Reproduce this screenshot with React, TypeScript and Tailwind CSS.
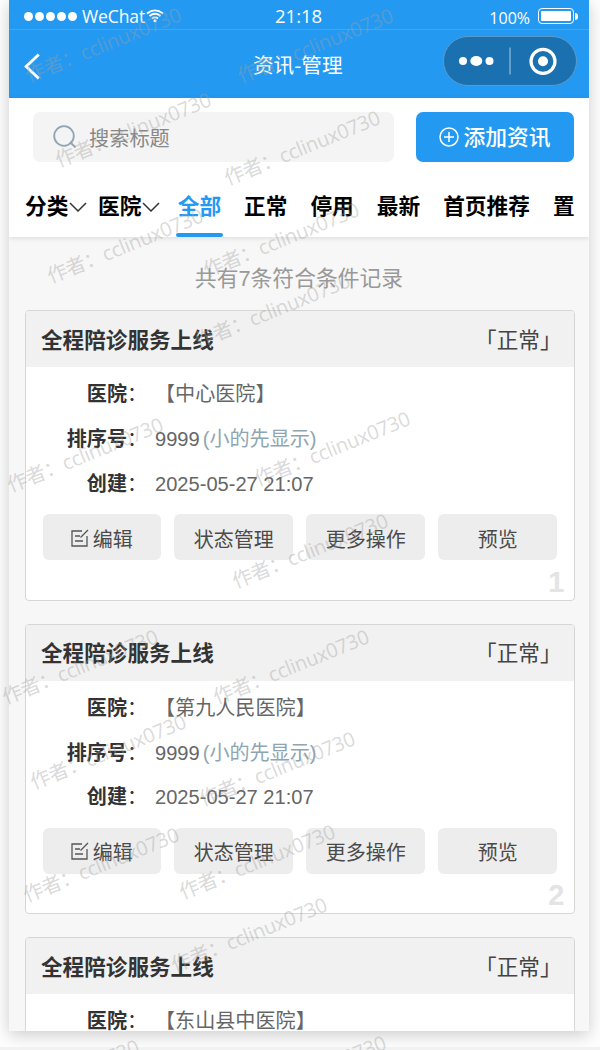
const filters = ["正常", "停用", "最新", "首页推荐", "置顶"]

const records = [
  { id: 1, title: "全程陪诊服务上线", hospital: "【中心医院】" },
  { id: 2, title: "全程陪诊服务上线", hospital: "【第九人民医院】" },
  { id: 3, title: "全程陪诊服务上线", hospital: "【东山县中医院】" },
]

// Centre points of the watermark stamps
const stamps = [
  [103, 45], [315, 46], [133, 130], [302, 148], [125, 246], [281, 240],
  [272, 311], [85, 455], [332, 449], [310, 551], [80, 667], [291, 667],
  [108, 752], [277, 769], [101, 865], [257, 862], [249, 935], [61, 1077], [308, 1073],
]

function StatusBar() {
  return (
    <div className="relative flex h-[29px] shrink-0 items-center justify-between pl-[15px] pr-[11px] pt-[3px]">
      <div className="flex items-center">
        <div className="flex gap-[2px]">
          {[0, 1, 2, 3, 4].map((dot) => (
            <span key={dot} className="size-[9px] rounded-full bg-white" />
          ))}
        </div>
        <span className="ml-[5px] w-[64px] text-[17.5px] leading-6 tracking-[-0.1px]">WeChat</span>
        <svg viewBox="0 0 18 14" className="h-[14px] w-[18px]" fill="none" stroke="white" strokeWidth="1.8">
          <path d="M1 4.5Q9-1.8 17 4.5M3.5 7Q9 2.6 14.5 7M6 9.5Q9 7.2 12 9.5" />
          <circle cx="9" cy="11.8" r="1.5" fill="white" stroke="none" />
        </svg>
      </div>
      <span className="absolute left-[266px] top-[4px] text-[18.5px] leading-6">21:18</span>
      <div className="flex items-center">
        <span className="mt-[3px] text-[16px] leading-5">100%</span>
        <div className="ml-[8px] h-[16px] w-[36px] rounded-[4px] border border-white p-[2px]">
          <div className="h-full rounded-[1px] bg-white" />
        </div>
        <span className="ml-[1px] h-[7px] w-[3px] rounded-r-full bg-white" />
      </div>
    </div>
  )
}

function NavBar() {
  return (
    <div className="relative flex h-[69px] shrink-0 items-center justify-between border-t border-[#43a6f3] pl-[14px] pr-[12px]">
      <svg viewBox="0 0 18 28" className="mt-[5px] h-[27px] w-[18px]" fill="none" stroke="white" strokeWidth="3">
        <path d="M16 1.5L3 14l13 12.5" />
      </svg>
      <span className="absolute left-[244px] top-[19px] font-['Noto_Sans_CJK_SC'] text-[20.6px] leading-[30px]">
        资讯-管理
      </span>
      <div className="mb-[6px] flex h-[50px] w-[134px] items-center rounded-full border border-[#5b9bcb] bg-[#1b70b0]">
        <svg viewBox="0 0 132 48" className="h-[48px] w-[132px]" fill="white">
          <circle cx="19" cy="24" r="4" />
          <ellipse cx="32.3" cy="24" rx="6" ry="5" />
          <circle cx="45.5" cy="24" r="4" />
          <path d="M65 10.5h2v27h-2z" fill="#649fc9" />
          <circle cx="99" cy="24.3" r="12" fill="none" stroke="white" strokeWidth="3.2" />
          <circle cx="99" cy="24.3" r="5" />
        </svg>
      </div>
    </div>
  )
}

function Arrow() {
  return (
    <svg viewBox="0 0 18 10" className="ml-px h-[10px] w-[18px]" fill="none" stroke="#333" strokeWidth="1.5">
      <path d="M1 1l8 8 8-8" />
    </svg>
  )
}

function Toolbar() {
  return (
    <div className="relative z-10 h-[139px] shrink-0 bg-white shadow-[0_1px_5px_rgba(0,0,0,0.12)]">
      <div className="flex pl-[24px] pr-[15px] pt-[14px]">
        <div className="flex h-[50px] w-[361px] items-center rounded-[7px] bg-[#f4f4f4] pl-[20px]">
          <svg viewBox="0 0 24 24" className="size-[24px]" fill="none" stroke="#8fa5b2" strokeWidth="1.8">
            <circle cx="11" cy="11" r="9.8" />
            <path d="M17 17l5.5 5.5" />
          </svg>
          <span className="ml-[12px] mt-[4px] text-[20.2px] text-[#888]">搜索标题</span>
        </div>
        <button className="ml-[22px] flex h-[50px] w-[158px] items-center justify-center rounded-[7px] bg-[#2499f2] text-white">
          <svg viewBox="0 0 20 20" className="size-[20px]" fill="none" stroke="white" strokeWidth="1.5">
            <circle cx="10" cy="10" r="9" />
            <path d="M10 5v10M5 10h10" />
          </svg>
          <span className="ml-[4px] pt-[3px] text-[21.8px] font-medium">添加资讯</span>
        </button>
      </div>
      <div className="mr-[14px] mt-[29px] flex h-[46px] overflow-hidden whitespace-nowrap pl-[16px] text-[21.7px] font-bold leading-[32px] text-black">
        <div className="flex w-[73px] shrink-0 items-center self-start">分类<Arrow /></div>
        <div className="flex w-[78px] shrink-0 items-center self-start">医院<Arrow /></div>
        <div className="flex w-[47px] shrink-0 flex-col items-center justify-between text-[#2499f2]">
          全部
          <span className="h-[4px] w-full rounded-[2px] bg-[#2499f2]" />
        </div>
        <div className="ml-[21px] flex shrink-0 gap-[23px]">
          {filters.map((label) => (
            <span key={label}>{label}</span>
          ))}
        </div>
      </div>
    </div>
  )
}

function Row({ label, children }: { label: string; children: React.ReactNode }) {
  return (
    <div className="flex h-[44.8px] items-center text-[20.1px]">
      <span className="w-[101px] text-right font-bold text-[#333]">{label}</span>
      <span className="w-[28px] text-[#333]">：</span>
      <span className="text-[#666]">{children}</span>
    </div>
  )
}

function RecordCard({ id, title, hospital }: { id: number; title: string; hospital: string }) {
  const button = "flex h-[46px] items-center justify-center rounded-[6px] bg-[#ededed] pt-[5px]"
  return (
    <div className="relative h-[290.5px] shrink-0 overflow-hidden rounded-[4px] border border-[#d6d6d6] bg-white">
      <div className="flex h-[56px] items-center justify-between bg-[#f1f1f1] pl-[15px] pr-[12px] pt-[4px] text-[21.6px] text-[#333]">
        <span className="font-bold">{title}</span>
        <span className="text-[#444]">「正常」</span>
      </div>
      <div className="pt-[5px]">
        <Row label="医院">{hospital}</Row>
        <Row label="排序号">
          9999<span className="ml-[3px] text-[#8fa5b2]">(小的先显示)</span>
        </Row>
        <Row label="创建">2025-05-27 21:07</Row>
      </div>
      <div className="mt-[8px] grid grid-cols-4 gap-[13.4px] pl-[16.5px] pr-[16.5px] text-[20px] text-[#4a4a4a]">
        <div className={button}>
          <svg viewBox="0 0 18 18" className="mb-[4px] mr-[4px] size-[18px]" fill="none" stroke="#555" strokeWidth="1.3">
            <path d="M11 2H1v15h15V7M4 7h5M4 12h8M9.5 8.5L17 1" />
          </svg>
          编辑
        </div>
        <div className={button}>状态管理</div>
        <div className={button}>更多操作</div>
        <div className={button}>预览</div>
      </div>
      <span className="absolute bottom-0 right-[9px] text-[29px] font-bold leading-[35px] text-[#e4e4e4]">{id}</span>
    </div>
  )
}

export default function App() {
  return (
    <div className="relative h-[1050px] w-[600px] overflow-hidden bg-[#fefefe] font-['Liberation_Sans','Noto_Sans_CJK_SC',sans-serif]">
      <div className="ml-[9px] flex h-[1031px] w-[580px] flex-col overflow-hidden bg-[#f7f7f7] shadow-[0_4px_16px_rgba(0,0,0,0.2)]">
        <div className="shrink-0 bg-[#2499f2] font-['Open_Sans','Noto_Sans_CJK_SC',sans-serif] text-white">
          <StatusBar />
          <NavBar />
        </div>
        <Toolbar />
        <p className="mt-[25px] h-[34px] shrink-0 text-center text-[21.8px] leading-[34px] text-[#999]">
          共有7条符合条件记录
        </p>
        <div className="mt-[14px] flex flex-col gap-[23px] pl-[16px] pr-[14.5px]">
          {records.map((record) => (
            <RecordCard key={record.id} {...record} />
          ))}
        </div>
      </div>
      <div className="mt-[16px] h-[3px] bg-[#f2f2f2]" />

      {/* Author watermark */}
      <div className="pointer-events-none absolute inset-0 z-20 overflow-hidden">
        {stamps.map(([x, y]) => (
          <span
            key={`${x}-${y}`}
            className="absolute -translate-x-1/2 -translate-y-1/2 -rotate-[22deg] whitespace-nowrap font-['Open_Sans','Noto_Sans_CJK_SC',sans-serif] text-[20px] leading-6 tracking-[-0.3px] text-[#a0a0a0]/40"
            style={{ left: x, top: y }}
          >
            作者：cclinux0730
          </span>
        ))}
      </div>
    </div>
  )
}
